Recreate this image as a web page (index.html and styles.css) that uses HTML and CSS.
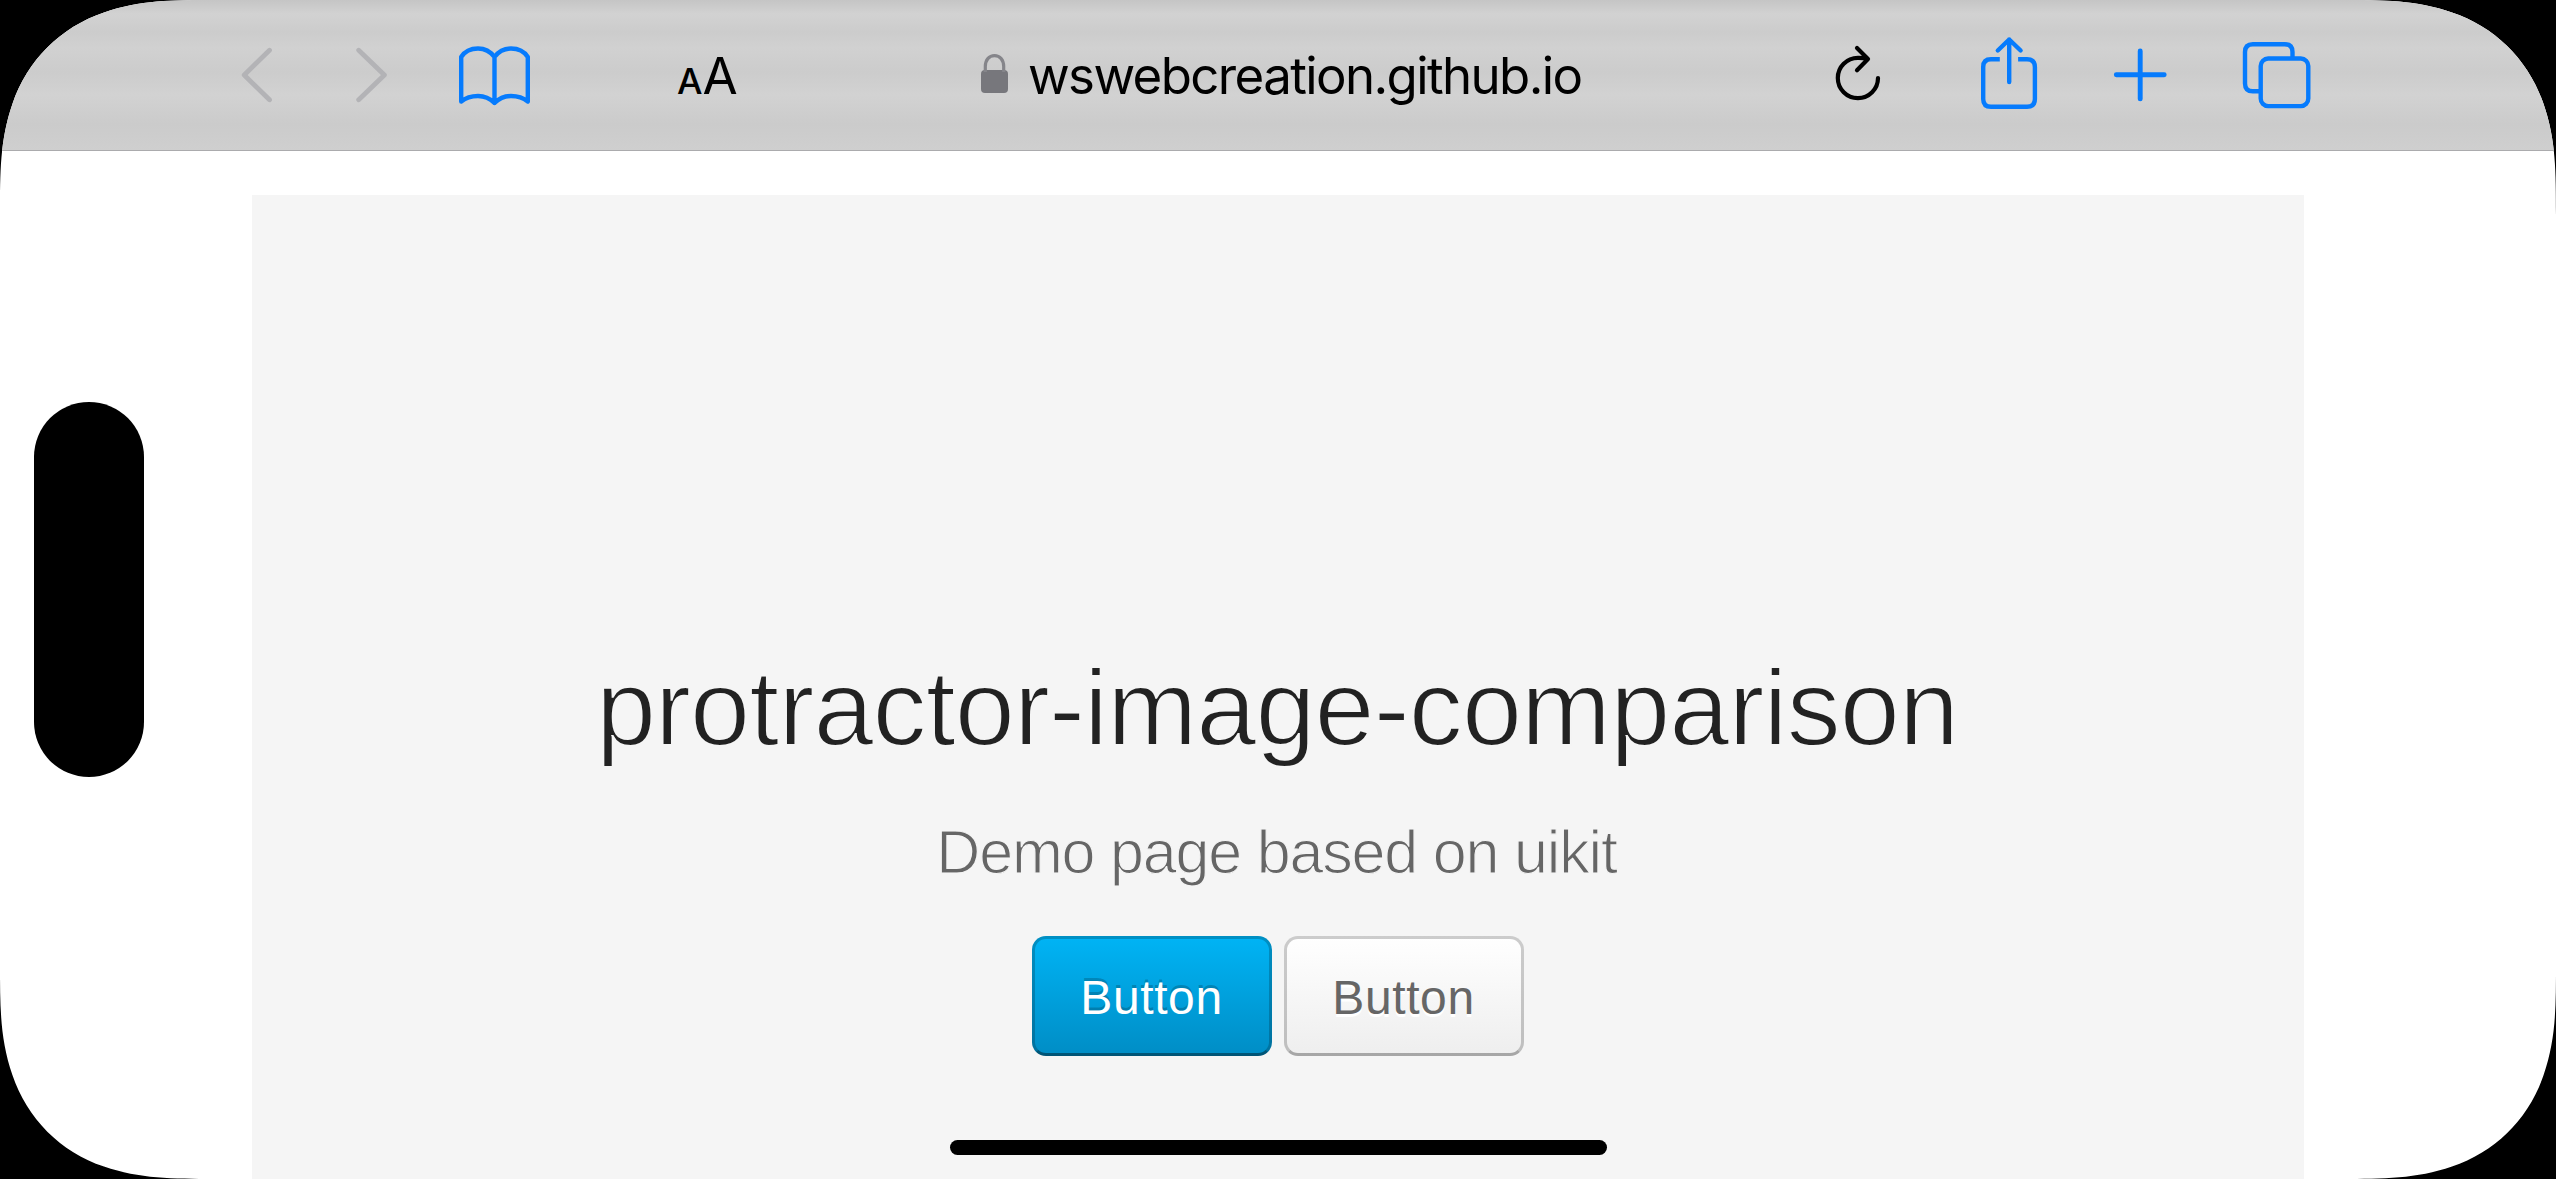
FILE: index.html
```html
<!DOCTYPE html>
<html lang="en">
<head>
<meta charset="utf-8">
<title>protractor-image-comparison</title>
<link rel="stylesheet" href="styles.css">
</head>
<body>
<div class="screen">
  <header class="toolbar">
    <svg class="icon back" width="32" height="80" viewBox="240 36 32 80"><path d="M269.5 50.2 244.2 75l25.3 24.8"/></svg>
    <svg class="icon forward" width="32" height="80" viewBox="356 36 32 80"><path d="M358.7 50.2 384.4 75l-25.7 24.8"/></svg>
    <svg class="icon book" width="73" height="80" viewBox="458 36 73 80"><path d="M494.5 57C490 51 484 48.500 478 48.500S465 51 461.200 57V101.500C466 97.500 472 96 478 96S490 98.500 494.500 103C499 98.500 505 96 511 96S523 97.500 527.800 101.500V57C524 51 517 48.500 511 48.500S499 51 494.500 57V103"/></svg>
    <div class="reader"><span class="small-a">A</span><span class="big-a">A</span></div>
    <div class="address">
      <svg class="lock" width="27" height="80" viewBox="981 36 27 80"><rect x="981" y="70" width="27" height="23" rx="4"/><path d="M985.300 72V66.500C985.300 60 989 55.600 994.500 55.600S1003.700 60 1003.700 66.500V72"/></svg>
      <span class="url">wswebcreation.github.io</span>
    </div>
    <svg class="icon reload" width="46" height="80" viewBox="1835 36 46 80"><path d="M1878 78A20.100 20.100 0 1 1 1857.900 57.900Q1863 57.800 1867.500 59M1857 48l11 11-11 11.200"/></svg>
    <svg class="icon share" width="58" height="80" viewBox="1980 36 58 80"><path class="flat" d="M1999.800 59.300H1991Q1983.200 59.300 1983.200 67V99Q1983.200 106.800 1991 106.800H2027Q2034.900 106.800 2034.900 99V67Q2034.900 59.300 2027 59.300H2018.100"/><path d="M2009.200 82V39.500M1997.800 50.500 2009.200 39.500 2020.600 50.500"/></svg>
    <svg class="icon plus" width="54" height="80" viewBox="2113 36 54 80"><path d="M2116.300 74.700H2164.200M2140.200 50.900V98.900"/></svg>
    <svg class="icon tabs" width="70" height="80" viewBox="2242 36 70 80"><path class="flat" d="M2292.500 57V52Q2292.500 44.200 2284.700 44.200H2252.800Q2245 44.200 2245 52V83.500Q2245 91.300 2252.800 91.300H2259"/><rect x="2260.700" y="58.500" width="47.600" height="47.600" rx="7.500"/></svg>
  </header>
  <main class="hero">
    <h1 class="title">protractor-image-comparison</h1>
    <p class="lead">Demo page based on uikit</p>
    <div class="actions">
      <button class="button primary">Button</button>
      <button class="button">Button</button>
    </div>
  </main>
  <div class="island"></div>
  <div class="home-indicator"></div>
</div>
</body>
</html>
```
FILE: styles.css
```css
* { box-sizing: border-box; }

html, body {
  margin: 0;
  background: #000;
  overflow: hidden;
}

.screen {
  position: relative;
  width: 2556px;
  height: 1179px;
  overflow: hidden;
  background: #fff;
  /* continuous-curvature display corners */
  clip-path: path("M215 0H2341C2384 0 2416 0 2452 12.400C2495.500 27 2529 60.500 2543.600 104C2556 140 2556 172 2556 215V964C2556 1007 2556 1039 2543.600 1075C2529 1118.500 2495.500 1152 2452 1166.600C2416 1179 2384 1179 2341 1179H215C172 1179 140 1179 104 1166.600C60.500 1152 27 1118.500 12.400 1075C0 1039 0 1007 0 964V215C0 172 0 140 12.400 104C27 60.500 60.500 27 104 12.400C140 0 172 0 215 0Z");
}

.toolbar {
  display: flex;
  align-items: flex-start;
  height: 151px;
  padding: 36px 0 0 240px;
  border-bottom: 1px solid #ababad;
  background: linear-gradient(#c5c5c5 0, #d2d2d2 14px, #cccccc 32px, #d1d1d1 48px, #cccccc 72px, #d2d2d2 95px, #cbcbcb 124px, #cfcfcf 150px);
}

.icon {
  flex: none;
  fill: none;
  stroke: #067bfd;
  stroke-width: 4.400;
  stroke-linecap: round;
  stroke-linejoin: round;
}
.flat { stroke-linecap: butt; }
.back, .forward { stroke: #b3b3b6; stroke-width: 4.800; }
.forward { margin-left: 84px; }
.book { margin-left: 70px; }
.reload { margin-left: 254px; stroke: #000; stroke-width: 4.200; }
.share { margin-left: 99px; }
.plus { margin-left: 75px; stroke-width: 4.900; }
.tabs { margin-left: 75px; }

.reader, .address {
  display: flex;
  flex: none;
  height: 80px;
  font-family: Inter, "Liberation Sans", sans-serif;
  color: #000;
  white-space: nowrap;
}
.reader {
  align-items: baseline;
  width: 58px;
  margin-left: 146px;
  line-height: 80px;
}
.small-a { font-size: 36px; font-weight: 500; width: 26px; }
.big-a { font-size: 51px; }

.address { width: 600px; margin-left: 246px; }
.lock { flex: none; fill: #77777c; }
.lock path { fill: none; stroke: #85858a; stroke-width: 3.200; }
.url {
  margin-left: 20px;
  font-size: 51px;
  line-height: 80px;
  letter-spacing: -1.620px;
}

.hero {
  display: flex;
  flex-direction: column;
  align-items: center;
  width: 2052px;
  height: 984px;
  margin: 44px auto 0;
  padding-top: 451px;
  background: #f5f5f5;
  font-family: "Liberation Sans", Arial, sans-serif;
  text-align: center;
}
/* the background-coloured stroke thins the regular weight to a light one */
.title {
  margin: 0 2px 0 0;
  color: #222;
  font-size: 108px;
  font-weight: 400;
  line-height: 124px;
  letter-spacing: -0.900px;
  white-space: nowrap;
  -webkit-text-stroke: 2px #f5f5f5;
}
.lead {
  margin: 40px 3px 0 0;
  color: #666;
  font-size: 61px;
  line-height: 84px;
  letter-spacing: -1.180px;
  -webkit-text-stroke: 1.200px #f5f5f5;
}
.actions {
  display: flex;
  gap: 12px;
  margin-top: 42px;
}
.button {
  width: 240px;
  height: 120px;
  padding: 3px 1px 0 0;
  border: 3px solid rgba(0, 0, 0, .2);
  border-bottom-color: rgba(0, 0, 0, .3);
  border-radius: 14px;
  background: #f5f5f5 linear-gradient(#fff, #eee) border-box;
  color: #666;
  font: 48px/111px "Liberation Sans", Arial, sans-serif;
  letter-spacing: 0.600px;
  text-shadow: 0 3px 0 #fff;
}
.primary {
  border-bottom-color: rgba(0, 0, 0, .4);
  background: #009dd8 linear-gradient(#00b4f5, #008dc5) border-box;
  color: #fff;
  text-shadow: 0 -3px 0 rgba(0, 0, 0, .2);
}

.island {
  position: absolute;
  left: 34px;
  top: 402px;
  width: 110px;
  height: 375px;
  border-radius: 55px;
  background: #000;
}
.home-indicator {
  position: absolute;
  left: 950px;
  top: 1140px;
  width: 657px;
  height: 15px;
  border-radius: 8px;
  background: #000;
}
```
